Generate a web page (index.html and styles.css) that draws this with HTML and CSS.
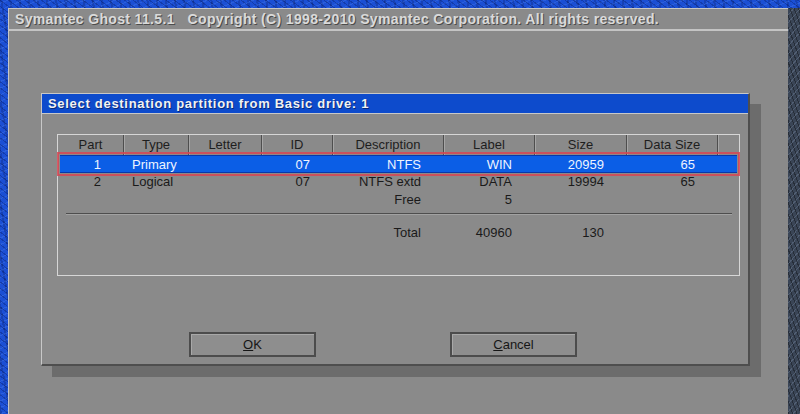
FILE: index.html
```html
<!DOCTYPE html>
<html lang="en">
<head>
<meta charset="utf-8">
<title>Symantec Ghost 11.5.1</title>
<link rel="stylesheet" href="styles.css">
</head>
<body>
<div class="desktop">
  <div class="window">
    <div class="titlebar">Symantec Ghost 11.5.1&nbsp;&nbsp;&nbsp;Copyright (C) 1998-2010 Symantec Corporation. All rights reserved.</div>
    <div class="workspace">
      <div class="dialog">
        <div class="dlg-title">Select destination partition from Basic drive: 1</div>
        <div class="dlg-body">
          <div class="ptable">
            <div class="row head">
              <div class="c">Part</div>
              <div class="c">Type</div>
              <div class="c">Letter</div>
              <div class="c">ID</div>
              <div class="c">Description</div>
              <div class="c">Label</div>
              <div class="c">Size</div>
              <div class="c">Data Size</div>
              <div class="c"></div>
            </div>
            <div class="row data selected">
              <div class="c r">1</div>
              <div class="c l">Primary</div>
              <div class="c"></div>
              <div class="c r">07</div>
              <div class="c r">NTFS</div>
              <div class="c r">WIN</div>
              <div class="c r">20959</div>
              <div class="c r">65</div>
              <div class="c"></div>
            </div>
            <div class="row data">
              <div class="c r">2</div>
              <div class="c l">Logical</div>
              <div class="c"></div>
              <div class="c r">07</div>
              <div class="c r">NTFS extd</div>
              <div class="c r">DATA</div>
              <div class="c r">19994</div>
              <div class="c r">65</div>
              <div class="c"></div>
            </div>
            <div class="row data">
              <div class="c r"></div>
              <div class="c l"></div>
              <div class="c"></div>
              <div class="c r"></div>
              <div class="c r">Free</div>
              <div class="c r">5</div>
              <div class="c r"></div>
              <div class="c r"></div>
              <div class="c"></div>
            </div>
            <div class="divider"></div>
            <div class="row data total">
              <div class="c r"></div>
              <div class="c l"></div>
              <div class="c"></div>
              <div class="c r"></div>
              <div class="c r">Total</div>
              <div class="c r">40960</div>
              <div class="c r">130</div>
              <div class="c r"></div>
              <div class="c"></div>
            </div>
          </div>
          <div class="actions">
            <button class="btn" type="button"><u>O</u>K</button>
            <button class="btn" type="button"><u>C</u>ancel</button>
          </div>
        </div>
      </div>
    </div>
  </div>
  <div class="rstrip"></div>
</div>
</body>
</html>
```
FILE: styles.css
```css
html, body {
  margin: 0;
  padding: 0;
}

body {
  width: 800px;
  height: 414px;
  overflow: hidden;
  font-family: "Liberation Sans", Arial, sans-serif;
  background:
    repeating-linear-gradient(37deg, rgba(0, 10, 60, 0.28) 0 1px, transparent 1px 5px),
    repeating-linear-gradient(-23deg, rgba(120, 170, 255, 0.18) 0 1px, transparent 1px 6px),
    repeating-linear-gradient(80deg, rgba(0, 0, 40, 0.18) 0 2px, transparent 2px 9px),
    #1b4fd4;
}

.desktop {
  display: flex;
  padding: 8px 0 0 8px;
  height: 406px;
}

.window {
  width: 779px;
  height: 406px;
  background: #8a8a8a;
  border-left: 1px solid #c6c6c6;
  border-top: 1px solid #c6c6c6;
  display: flex;
  flex-direction: column;
}

.rstrip {
  width: 12px;
  height: 406px;
  background:
    repeating-linear-gradient(70deg, rgba(0, 0, 0, 0.35) 0 1px, transparent 1px 4px),
    repeating-linear-gradient(-50deg, rgba(150, 170, 200, 0.25) 0 1px, transparent 1px 5px),
    #3a4556;
}

.titlebar {
  height: 20px;
  line-height: 21px;
  padding-left: 6px;
  font-size: 14px;
  font-weight: bold;
  letter-spacing: 0.35px;
  color: #dadada;
  text-shadow: 1px 1px 0 #4c4c4c;
  white-space: nowrap;
  border-bottom: 2px solid #c4c4c4;
}

.workspace {
  padding: 62px 0 0 32px;
}

.dialog {
  box-sizing: border-box;
  width: 709px;
  height: 273px;
  background: #8a8a8a;
  border-top: 1px solid #c8c8c8;
  border-left: 1px solid #c8c8c8;
  border-right: 2px solid #4e4e4e;
  border-bottom: 2px solid #4e4e4e;
  box-shadow: 11px 11px 0 #6c6c6c;
}

.dlg-title {
  height: 19px;
  line-height: 20px;
  padding-left: 6px;
  background: #0d4bcc;
  color: #f2f2f2;
  font-size: 13px;
  font-weight: bold;
  letter-spacing: 0.7px;
  text-shadow: 1px 1px 0 #0a2a78;
  border-bottom: 1px solid #c8c8c8;
  white-space: nowrap;
}

.dlg-body {
  padding: 20px 0 0 15px;
}

.ptable {
  box-sizing: border-box;
  width: 683px;
  height: 142px;
  border: 1px solid #d6d6d6;
  font-size: 13px;
  color: #1a1a1a;
}

.row {
  display: grid;
  grid-template-columns: 66px 65px 73px 71px 111px 91px 92px 91px 1fr;
  height: 18px;
  line-height: 18px;
  white-space: nowrap;
}

.row.head {
  height: 20px;
  line-height: 20px;
}

.row.head .c {
  text-align: center;
  border-right: 1px solid #4e4e4e;
  box-shadow: inset 1px 0 0 #a6a6a6;
  color: #1e1e1e;
}

.row.head .c:first-child {
  box-shadow: none;
}

.row.head .c:last-child {
  border-right: none;
}

.c.r {
  text-align: right;
  padding-right: 23px;
}

.c.l {
  text-align: left;
  padding-left: 8px;
}

.row.selected {
  margin: 0 2px;
  grid-template-columns: 64px 65px 73px 71px 111px 91px 92px 91px 1fr;
  background: #0b5ee6;
  border-top: 1px solid #0a38a8;
  border-bottom: 1px solid #0a38a8;
  height: 16px;
  line-height: 17px;
  color: #eef4ff;
  outline: 2px solid rgba(214, 70, 84, 0.85);
  outline-offset: 1px;
}

.divider {
  margin: 4px 7px 0 8px;
  height: 1px;
  background: #4e4e4e;
  border-bottom: 1px solid #a2a2a2;
}

.row.total {
  margin-top: 9px;
}

.actions {
  display: flex;
  gap: 134px;
  padding-left: 132px;
  margin-top: 56px;
}

.btn {
  box-sizing: border-box;
  width: 127px;
  height: 25px;
  padding: 0;
  font-family: "Liberation Sans", Arial, sans-serif;
  font-size: 13px;
  color: #161616;
  background: #8e8e8e;
  border: 2px solid #4c4c4c;
  box-shadow: inset 1px 1px 0 #a8a8a8;
}
```
